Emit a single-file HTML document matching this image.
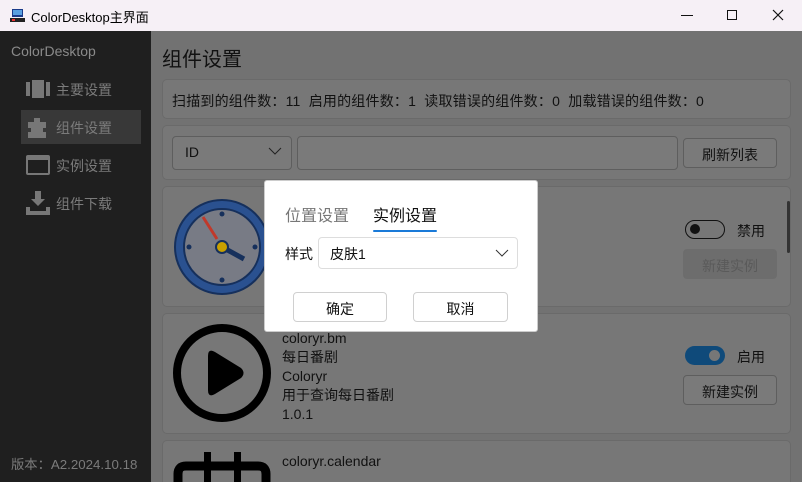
<!DOCTYPE html>
<html><head><meta charset="utf-8"><style>
*{margin:0;padding:0;box-sizing:border-box}
html,body{width:802px;height:482px;overflow:hidden}
body{background:#727272;font-family:"Liberation Sans","Noto Sans CJK SC",sans-serif;position:relative;color:#111}
#w{position:absolute;left:0;top:0;width:802px;height:482px;overflow:hidden}
.a{position:absolute}
.card{position:absolute;background:#777;border:1px solid #6a6a6a;border-radius:5px}
.btn{position:absolute;border:1px solid #5e5e5e;border-radius:4px;background:#7a7a7a;font-size:14px;text-align:center;color:#111}
.t{position:absolute;font-size:14px;white-space:nowrap}
.side{position:absolute;font-size:14px;color:#7b7b7b;white-space:nowrap}
</style></head><body><div id="w">
<div class="a" style="left:0;top:0;width:802px;height:31px;background:#f6f0f6"></div>
<svg class="a" style="left:10px;top:8px" width="15" height="15"><rect x="2" y="1" width="11" height="8" fill="#1a3b8a"/><rect x="3" y="2" width="9" height="5" fill="#5aa0e0"/><rect x="0" y="10" width="15" height="4" fill="#222"/><rect x="2" y="11" width="3" height="2" fill="#e33"/></svg>
<div class="t" style="left:31px;top:7px;font-size:13px;color:#000">ColorDesktop主界面</div>
<div class="a" style="left:681px;top:15px;width:12px;height:1px;background:#111"></div>
<div class="a" style="left:727px;top:10px;width:10px;height:10px;border:1px solid #111"></div>
<svg class="a" style="left:772px;top:9px" width="12" height="12"><path d="M1 1L11 11M11 1L1 11" stroke="#111" stroke-width="1.2"/></svg>
<div class="a" style="left:0;top:31px;width:151px;height:451px;background:#1f1f1f"></div>
<div class="side" style="left:11px;top:43px;color:#8a8a8a">ColorDesktop</div>
<div class="a" style="left:26px;top:80px;width:24px;height:18px"><div class="a" style="left:0;top:2px;width:4px;height:14px;background:#777"></div><div class="a" style="left:6px;top:0;width:12px;height:18px;background:#777"></div><div class="a" style="left:20px;top:2px;width:4px;height:14px;background:#777"></div></div>
<div class="side" style="left:56px;top:80px">主要设置</div>
<div class="a" style="left:21px;top:110px;width:120px;height:34px;background:#383838"></div>
<svg class="a" style="left:26px;top:116px" width="24" height="22"><path d="M2 6h6V2h6v4h6v6h-3v4h3v6H2v-6h3v-4H2z" fill="#777"/></svg>
<div class="side" style="left:56px;top:118px">组件设置</div>
<div class="a" style="left:26px;top:155px;width:24px;height:20px;border:2px solid #777;border-top:5px solid #777;border-radius:2px"></div>
<div class="side" style="left:56px;top:156px">实例设置</div>
<svg class="a" style="left:26px;top:191px" width="24" height="24"><path d="M9 0h6v8h4l-7 7-7-7h4z M0 16h4v4h16v-4h4v8H0z" fill="#777"/></svg>
<div class="side" style="left:56px;top:194px">组件下载</div>
<div class="side" style="left:11px;top:454px;font-size:13.3px">版本：A2.2024.10.18</div>
<div class="t" style="left:162px;top:43px;font-size:20px;color:#111">组件设置</div>
<div class="card" style="left:162px;top:79px;width:629px;height:40px"></div>
<div class="t" style="left:172px;top:91px;letter-spacing:0.2px">扫描到的组件数：11&nbsp;&nbsp;启用的组件数：1&nbsp;&nbsp;读取错误的组件数：0&nbsp;&nbsp;加载错误的组件数：0</div>
<div class="card" style="left:162px;top:125px;width:629px;height:55px"></div>
<div class="btn" style="left:172px;top:136px;width:120px;height:34px;text-align:left;padding:7px 12px">ID</div>
<svg class="a" style="left:268px;top:147px" width="14" height="9"><path d="M1 1l6 6 6-6" stroke="#222" fill="none"/></svg>
<div class="btn" style="left:297px;top:136px;width:381px;height:34px"></div>
<div class="btn" style="left:683px;top:138px;width:94px;height:30px;padding-top:6px">刷新列表</div>
<div class="card" style="left:162px;top:186px;width:629px;height:121px"></div>
<svg class="a" style="left:172px;top:197px" width="100" height="100"><circle cx="50" cy="50" r="47" fill="#2a5190" stroke="#16305c" stroke-width="2"/><circle cx="50" cy="50" r="38" fill="#787b85" stroke="#16305c" stroke-width="2"/><g fill="#16305c"><circle cx="50" cy="17" r="2.5"/><circle cx="50" cy="83" r="2.5"/><circle cx="17" cy="50" r="2.5"/><circle cx="83" cy="50" r="2.5"/></g><path d="M31 20l14 22" stroke="#c0392b" stroke-width="3"/><path d="M50 50l22 12" stroke="#16305c" stroke-width="5"/><circle cx="50" cy="50" r="6" fill="#c8a000" stroke="#16305c" stroke-width="2"/></svg>
<div class="a" style="left:685px;top:220px;width:40px;height:19px;border:1.5px solid #111;border-radius:10px"><div class="a" style="left:4px;top:3px;width:10px;height:10px;border-radius:50%;background:#111"></div></div>
<div class="t" style="left:737px;top:221px">禁用</div>
<div class="btn" style="left:683px;top:249px;width:94px;height:30px;padding-top:6px;background:#6d6d6d;color:#5a5a5a;border-color:#6d6d6d">新建实例</div>
<div class="a" style="left:787px;top:201px;width:3px;height:52px;background:#333;border-radius:2px"></div>
<div class="card" style="left:162px;top:313px;width:629px;height:121px"></div>
<svg class="a" style="left:172px;top:323px" width="100" height="100"><circle cx="50" cy="50" r="45" fill="none" stroke="#000" stroke-width="8"/><path d="M36 33q0-8 7-4l26 16q5 5 0 10l-26 16q-7 4-7-4z" fill="#000"/></svg>
<div class="t" style="left:282px;top:329px;line-height:19px">coloryr.bm<br>每日番剧<br>Coloryr<br>用于查询每日番剧<br>1.0.1</div>
<div class="a" style="left:685px;top:346px;width:40px;height:19px;border-radius:10px;background:#0f4a7a"><div class="a" style="left:24px;top:4px;width:11px;height:11px;border-radius:50%;background:#777"></div></div>
<div class="t" style="left:737px;top:347px">启用</div>
<div class="btn" style="left:683px;top:375px;width:94px;height:30px;padding-top:6px">新建实例</div>
<div class="card" style="left:162px;top:440px;width:629px;height:60px"></div>
<svg class="a" style="left:172px;top:450px" width="100" height="32"><path d="M6 32v-8q0-8 8-8h72q8 0 8 8v8" fill="none" stroke="#000" stroke-width="9"/><rect x="32" y="2" width="7" height="30" fill="#000"/><rect x="62" y="2" width="7" height="30" fill="#000"/></svg>
<div class="t" style="left:282px;top:453px">coloryr.calendar</div>
<div class="a" style="left:264px;top:180px;width:274px;height:152px;background:#fff;border:1px solid #ccc;border-radius:3px"></div>
<div class="t" style="left:285px;top:202px;font-size:16px;color:#777">位置设置</div>
<div class="t" style="left:373px;top:202px;font-size:16px;color:#111">实例设置</div>
<div class="a" style="left:373px;top:230px;width:64px;height:2px;background:#1a7ad8;border-radius:1px"></div>
<div class="t" style="left:285px;top:244px">样式</div>
<div class="a" style="left:318px;top:237px;width:200px;height:32px;border:1px solid #ddd;border-radius:4px"></div>
<div class="t" style="left:330px;top:244px">皮肤1</div>
<svg class="a" style="left:495px;top:249px" width="14" height="9"><path d="M1 1l6 6 6-6" stroke="#333" fill="none"/></svg>
<div class="btn" style="left:293px;top:292px;width:94px;height:30px;padding-top:6px;background:#fff;border-color:#d0d0d0">确定</div>
<div class="btn" style="left:413px;top:292px;width:95px;height:30px;padding-top:6px;background:#fff;border-color:#d0d0d0">取消</div>
</div></body></html>
